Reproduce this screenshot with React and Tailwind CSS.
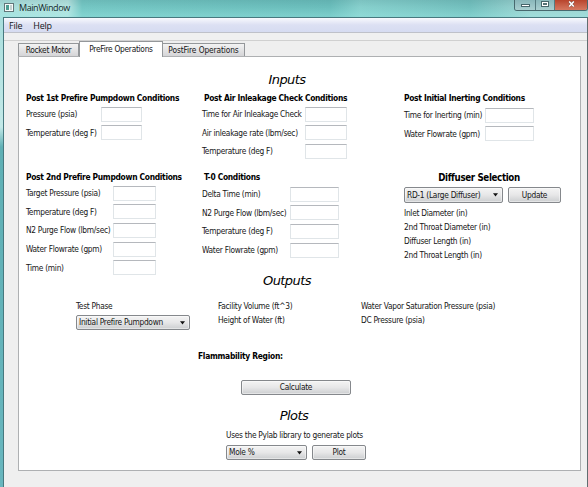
import React from "react";

function Label({ text, className = "" }) {
  return <span className={`whitespace-nowrap ${className}`}>{text}</span>;
}

function Field({ label, labelClass, boxClass }) {
  return (
    <div className="flex h-[18.6px] items-center">
      <span className={`shrink-0 whitespace-nowrap ${labelClass}`}>{label}</span>
      <input
        aria-label={label}
        className={`h-[15px] shrink-0 border border-[#e0e5e8] border-t-[#b5b8bd] bg-white outline-none ${boxClass}`}
      />
    </div>
  );
}

function Group({ title, titleClass = "", rowsClass = "", rows, labelClass, boxClass }) {
  return (
    <div className="flex flex-col">
      <h3 className={`flex h-[14px] items-center whitespace-nowrap text-[8.4px] font-bold tracking-[-0.3px] text-black ${titleClass}`}>
        {title}
      </h3>
      <div className={`flex flex-col ${rowsClass}`}>
        {rows.map((text) => (
          <Field key={text} label={text} labelClass={labelClass} boxClass={boxClass} />
        ))}
      </div>
    </div>
  );
}

const control =
  "flex items-center rounded-[2px] border border-[#85888c] bg-gradient-to-b from-[#f4f4f4] via-[#e7e7e8] to-[#ccced0] whitespace-nowrap shadow-[inset_0_0_0_1px_rgba(255,255,255,.45)]";

function Combo({ text, className }) {
  return (
    <button className={`${control} justify-between pr-[4px] pl-[2px] ${className}`}>
      <span>{text}</span>
      <svg width="5" height="4" viewBox="0 0 5 4">
        <path d="M0 .3h5L2.5 3.5z" fill="#111" />
      </svg>
    </button>
  );
}

function Heading({ children, className = "" }) {
  return (
    <h2 className={`flex items-center justify-center text-[13px] leading-none tracking-[-0.55px] text-black italic [font-family:'DejaVu_Sans',sans-serif] [font-stretch:normal] ${className}`}>
      {children}
    </h2>
  );
}

function TitleBar() {
  return (
    <div className="flex h-[17px] shrink-0 items-start justify-between bg-[linear-gradient(to_bottom,rgba(0,40,50,.08),transparent_40%,rgba(160,240,235,.3)_90%),linear-gradient(to_right,#a9dedb_0,#b4e2df_68px,#74c6c3_82px,#6abdbb_330px,#86cfcc_360px,#72bfbd_470px,#9ed3d1_530px)]">
      <div className="flex h-[14px] items-center pl-[4px]">
        <svg width="10" height="9" viewBox="0 0 10 9">
          <rect x=".5" y=".5" width="9" height="8" fill="#f6faf9" stroke="#62777a" />
          <path d="M2 2h3v5H2z" fill="#4e9d91" />
          <path d="M6 2h2v5H6z" fill="#c2d1d0" />
        </svg>
        <span className="ml-[5px] text-[9px] tracking-[-0.42px] text-[#13282a] [font-family:'Open_Sans','Noto_Sans',sans-serif] [font-stretch:normal]">
          MainWindow
        </span>
      </div>
      <div className="flex h-[11px] w-[74px] overflow-hidden rounded-b-[3px] border border-t-0 border-[#47696e]">
        <div className="flex w-[21px] justify-center border-r border-[#557b80] bg-gradient-to-b from-[#89b7ba] to-[#a9cfd0] pt-[4px]">
          <div className="h-[3px] w-[9px] border border-[#47666b] bg-white" />
        </div>
        <div className="flex w-[19px] justify-center border-r border-[#557b80] bg-gradient-to-b from-[#89b7ba] to-[#a9cfd0] pt-[1px]">
          <div className="flex h-[6px] w-[8px] items-center justify-center border border-[#47666b] bg-white">
            <div className="h-[2px] w-[4px] border border-[#557276]" />
          </div>
        </div>
        <div className="flex flex-1 justify-center bg-gradient-to-b from-[#b8442c] to-[#d57860] pt-[1px]">
          <svg width="7" height="6" viewBox="0 0 7 6">
            <path d="M1.2 .5 5.8 5.5M5.8 .5 1.2 5.5" stroke="#6b4640" strokeWidth="2.4" />
            <path d="M1.2 .5 5.8 5.5M5.8 .5 1.2 5.5" stroke="#fff" strokeWidth="1.6" />
          </svg>
        </div>
      </div>
    </div>
  );
}

const tab =
  "flex items-center justify-center border border-b-0 border-[#94979a] whitespace-nowrap";

export default function App() {
  return (
    <div className="flex h-[487px] w-[588px] flex-col overflow-hidden bg-[#64b7bc] text-[8.3px] leading-none tracking-[-0.28px] text-[#161616] [font-family:'DejaVu_Sans_Condensed','DejaVu_Sans',sans-serif] [font-stretch:condensed]">
      <TitleBar />
      <div className="flex min-h-0 flex-1 bg-[linear-gradient(to_bottom,#a9dedd_0,#c3e9e8_110px,#5fb0b5_130px,#68b6be_100%)] pl-[3px]">
        <div className="flex flex-1 flex-col border-x border-t border-[#47797f] border-r-[#616d70] bg-[#efefef]">
          <nav className="flex h-[15px] shrink-0 items-center gap-[11px] border-b border-[#bfc1c9] bg-gradient-to-b from-[#f8f9fd] via-[#dce0f3] to-[#d6dcf1] pl-[5px] text-[9px] tracking-[-0.25px] [font-family:'Open_Sans','Noto_Sans',sans-serif] [font-stretch:normal]">
            <span>File</span>
            <span>Help</span>
          </nav>
          <div className="h-[8px] shrink-0 border-b border-[#d0d0d0] bg-[#f0f0f0]" />
          <div className="flex h-[15px] shrink-0 items-end pl-[14px]">
            <div className={`${tab} h-[13px] w-[61px] bg-gradient-to-b from-[#f3f3f3] to-[#d5d5d7]`}>
              <Label text="Rocket Motor" />
            </div>
            <div className={`${tab} z-10 -mb-px h-[16px] w-[84px] bg-white`}>
              <Label text="PreFire Operations" />
            </div>
            <div className={`${tab} h-[13px] w-[82px] border-l-0 bg-gradient-to-b from-[#f3f3f3] to-[#d5d5d7]`}>
              <Label text="PostFire Operations" className="tracking-[-0.1px]" />
            </div>
          </div>
          <main className="ml-[14px] flex h-[415px] w-[563px] shrink-0 flex-col border border-[#aeb0b2] bg-white">
            <Heading className="mt-[13px] h-[19px] pr-[25px]">Inputs</Heading>
            <div className="mt-[2px] grid h-[79px] grid-cols-[176px_202px_1fr] pl-[7px]">
              <Group
                title="Post 1st Prefire Pumpdown Conditions"
                labelClass="w-[75px]"
                boxClass="w-[41px]"
                rows={["Pressure (psia)", "Temperature (deg F)"]}
              />
              <Group
                title="Post Air Inleakage Check Conditions"
                titleClass="pl-[2px]"
                labelClass="w-[103px]"
                boxClass="w-[42px]"
                rows={["Time for Air Inleakage Check", "Air inleakage rate (lbm/sec)", "Temperature (deg F)"]}
              />
              <Group
                title="Post Initial Inerting Conditions"
                rowsClass="pt-px"
                labelClass="w-[81px]"
                boxClass="w-[49px]"
                rows={["Time for Inerting (min)", "Water Flowrate (gpm)"]}
              />
            </div>
            <div className="grid h-[100px] grid-cols-[176px_202px_1fr] pl-[7px]">
              <Group
                title="Post 2nd Prefire Pumpdown Conditions"
                labelClass="w-[87px]"
                boxClass="w-[43px]"
                rows={["Target Pressure (psia)", "Temperature (deg F)", "N2 Purge Flow (lbm/sec)", "Water Flowrate (gpm)", "Time (min)"]}
              />
              <Group
                title="T-0 Conditions"
                titleClass="pl-[2px]"
                rowsClass="pt-px"
                labelClass="w-[88px]"
                boxClass="w-[49px]"
                rows={["Delta Time (min)", "N2 Purge Flow (lbm/sec)", "Temperature (deg F)", "Water Flowrate (gpm)"]}
              />
              <div className="flex flex-col items-start">
                <h3 className="flex h-[15px] w-[150px] items-center justify-center text-[9.7px] font-bold tracking-[-0.35px] whitespace-nowrap text-black">
                  Diffuser Selection
                </h3>
                <div className="mt-[2px] flex gap-[5px]">
                  <Combo text="RD-1 (Large Diffuser)" className="h-[16px] w-[99px]" />
                  <button className={`${control} h-[16px] w-[53px] justify-center`}>Update</button>
                </div>
                <div className="mt-[3px] flex flex-col">
                  {["Inlet Diameter (in)", "2nd Throat Diameter (in)", "Diffuser Length (in)", "2nd Throat Length (in)"].map((t) => (
                    <div key={t} className="flex h-[14px] items-center">
                      <Label text={t} />
                    </div>
                  ))}
                </div>
              </div>
            </div>
            <Heading className="mt-[1px] h-[19px] pr-[25px]">Outputs</Heading>
            <div className="mt-[9px] flex h-[45px] pl-[57px]">
              <div className="flex w-[142px] flex-col">
                <div className="flex h-[14px] items-center">
                  <Label text="Test Phase" />
                </div>
                <Combo text="Initial Prefire Pumpdown" className="mt-[2px] h-[15px] w-[114px]" />
              </div>
              <div className="flex w-[143px] flex-col">
                <div className="flex h-[14px] items-center"><Label text="Facility Volume (ft^3)" /></div>
                <div className="flex h-[14px] items-center"><Label text="Height of Water (ft)" /></div>
              </div>
              <div className="flex flex-col">
                <div className="flex h-[14px] items-center"><Label text="Water Vapor Saturation Pressure (psia)" /></div>
                <div className="flex h-[14px] items-center"><Label text="DC Pressure (psia)" /></div>
              </div>
            </div>
            <div className="mt-[5px] flex h-[14px] items-center pl-[179px] text-[8.4px] font-bold text-black">
              <Label text="Flammability Region:" />
            </div>
            <button className={`${control} mt-[17px] ml-[222px] h-[15px] w-[110px] justify-center`}>Calculate</button>
            <Heading className="mt-[11px] h-[19px] pr-[11px]">Plots</Heading>
            <div className="mt-[3px] flex h-[14px] items-center pl-[207px]">
              <Label text="Uses the Pylab library to generate plots" />
            </div>
            <div className="mt-[3px] flex gap-[5px] pl-[207px]">
              <Combo text="Mole %" className="h-[15px] w-[81px]" />
              <button className={`${control} h-[15px] w-[54px] justify-center`}>Plot</button>
            </div>
          </main>
        </div>
      </div>
    </div>
  );
}
